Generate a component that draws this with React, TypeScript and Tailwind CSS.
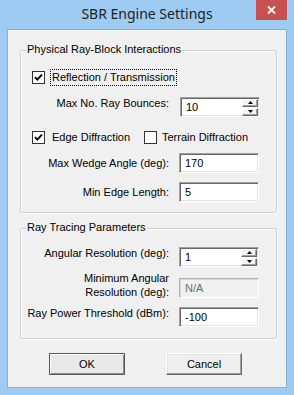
import React from "react";

function Check({ checked }: { checked: boolean }) {
  return (
    <span className="w-[13px] h-[13px] border border-[#333333] bg-white flex items-center justify-center shrink-0">
      {checked && (
        <svg width="11" height="11" viewBox="0 0 11 11">
          <path d="M2 5.2 L4.3 7.6 L9 2.6" fill="none" stroke="#000" strokeWidth="1.9" />
        </svg>
      )}
    </span>
  );
}

function SpinBtn({ up }: { up: boolean }) {
  return (
    <div className="h-[8px] w-[16px] bg-[#f4f4f4] border border-t-white border-l-white border-b-[#696969] border-r-[#696969] shadow-[inset_-1px_-1px_0_#a0a0a0] flex items-center justify-center">
      <svg width="5" height="3" viewBox="0 0 5 3">
        {up ? <path d="M0 3 L5 3 L2.5 0 Z" fill="#000" /> : <path d="M0 0 L5 0 L2.5 3 Z" fill="#000" />}
      </svg>
    </div>
  );
}

function Field({ value, spin }: { value: string; spin?: boolean }) {
  return (
    <div className="w-[80px] h-[20px] flex items-center border border-t-[#a0a0a0] border-l-[#a0a0a0] border-b-white border-r-white bg-white shadow-[inset_1px_1px_0_#696969,inset_-1px_-1px_0_#e3e3e3] shrink-0">
      <span className="flex-1 pl-[5px] leading-[13px]">{value}</span>
      {spin && (
        <div className="flex flex-col gap-px mr-[1px]">
          <SpinBtn up />
          <SpinBtn up={false} />
        </div>
      )}
    </div>
  );
}

function Disabled({ value }: { value: string }) {
  return (
    <div className="w-[80px] h-[20px] flex items-center border border-t-[#b4b4b4] border-l-[#b4b4b4] border-b-white border-r-white bg-[#f0f0f0] shadow-[inset_1px_1px_0_#d4d4d4] text-[#6d6d6d] shrink-0">
      <span className="pl-[5px] leading-[13px]">{value}</span>
    </div>
  );
}

export default function App() {
  return (
    <div className="w-[294px] h-[395px] bg-[#9ecbf1] flex flex-col relative font-['Liberation_Sans',Arial,sans-serif] text-[11px] text-black overflow-hidden">
      {/* title bar */}
      <div className="h-[29px] flex items-center justify-center shrink-0">
        <span className="font-['Noto_Sans',sans-serif] text-[14px] text-[#1f1f1f] leading-none -mt-[1px]">SBR Engine Settings</span>
      </div>
      <div className="absolute right-[7px] top-0 w-[31px] h-[20px] bg-[#c75050] flex items-center justify-center">
        <svg width="9" height="8" viewBox="0 0 9 8">
          <path d="M1 0.5 L8 7.5 M8 0.5 L1 7.5" stroke="#fff" strokeWidth="1.8" />
        </svg>
      </div>
      {/* client */}
      <div className="mx-[7px] border border-[#87aed4] bg-[#f0f0f0] flex flex-col h-[359px]">
        {/* group 1 */}
        <div className="mt-[20px] ml-[12px] w-[257px] h-[163px] border border-[#d0d0d0] rounded-[2px] shadow-[1px_1px_0_#fff,inset_1px_1px_0_#fff] relative flex flex-col">
          <span className="absolute left-[5px] -top-[8px] px-[1px] bg-[#f0f0f0] leading-[13px]">Physical Ray-Block Interactions</span>
          <div className="mt-[18px] h-[17px] flex items-center pl-[11px]">
            <Check checked />
            <span className="ml-[5px] h-[17px] px-[1px] flex items-center border border-dotted border-black leading-[13px]">Reflection / Transmission</span>
          </div>
          <div className="mt-[11px] h-[20px] flex items-start">
            <span className="w-[148px] text-right leading-[13px]">Max No. Ray Bounces:</span>
            <div className="ml-[11px]"><Field value="10" spin /></div>
          </div>
          <div className="mt-[14px] h-[13px] flex items-center pl-[11px]">
            <Check checked />
            <span className="ml-[7px] leading-[13px] w-[92px]">Edge Diffraction</span>
            <Check checked={false} />
            <span className="ml-[5px] leading-[13px]">Terrain Diffraction</span>
          </div>
          <div className="mt-[9px] h-[20px] flex items-center">
            <span className="w-[148px] text-right leading-[13px]">Max Wedge Angle (deg):</span>
            <div className="ml-[10px]"><Field value="170" /></div>
          </div>
          <div className="mt-[9px] h-[20px] flex items-center">
            <span className="w-[148px] text-right leading-[13px]">Min Edge Length:</span>
            <div className="ml-[10px]"><Field value="5" /></div>
          </div>
        </div>
        {/* group 2 */}
        <div className="mt-[15px] ml-[12px] w-[257px] h-[111px] border border-[#d0d0d0] rounded-[2px] shadow-[1px_1px_0_#fff,inset_1px_1px_0_#fff] relative flex flex-col">
          <span className="absolute left-[5px] -top-[8px] px-[1px] bg-[#f0f0f0] leading-[13px]">Ray Tracing Parameters</span>
          <div className="mt-[18px] h-[20px] flex items-start">
            <span className="w-[148px] text-right leading-[13px]">Angular Resolution (deg):</span>
            <div className="ml-[10px]"><Field value="1" spin /></div>
          </div>
          <div className="mt-[11px] h-[20px] flex items-start">
            <span className="w-[148px] text-right leading-[14px] -mt-[7px]">Minimum Angular<br />Resolution (deg):</span>
            <div className="ml-[10px]"><Disabled value="N/A" /></div>
          </div>
          <div className="mt-[9px] h-[20px] flex items-start">
            <span className="w-[148px] text-right leading-[13px]">Ray Power Threshold (dBm):</span>
            <div className="ml-[10px]"><Field value="-100" /></div>
          </div>
        </div>
        {/* buttons */}
        <div className="mt-[14px] flex">
          <button className="ml-[41px] w-[76px] h-[22px] bg-[#e9e9e9] border border-[#5a5a5a] shadow-[inset_1px_1px_0_#fff,inset_-1px_-1px_0_#8a8a8a] flex items-center justify-center leading-[13px]">OK</button>
          <button className="ml-[41px] w-[76px] h-[22px] bg-[#efefef] border border-t-white border-l-white border-b-[#696969] border-r-[#696969] shadow-[inset_-1px_-1px_0_#a0a0a0,inset_1px_1px_0_#e3e3e3] flex items-center justify-center leading-[13px]">Cancel</button>
        </div>
      </div>
    </div>
  );
}
